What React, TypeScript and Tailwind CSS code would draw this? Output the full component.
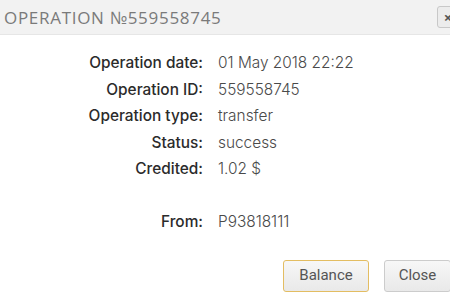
import React from 'react';

const rows: [string, string][] = [
    ['Operation date:', '01 May 2018 22:22'],
    ['Operation ID:', '559558745'],
    ['Operation type:', 'transfer'],
    ['Status:', 'success'],
    ['Credited:', '1.02 $'],
    ['', ''],
    ['From:', 'P93818111'],
];

export default function App() {
    return (
        <div className="w-[450px] h-[297px] overflow-hidden bg-white flex flex-col" style={{ fontFamily: '"Open Sans", sans-serif' }}>
            <div className="h-[35px] shrink-0 bg-[#f2f2f2] border-b border-[#e6e6e6] flex items-center justify-between pl-[4px]">
                <h1 className="text-[17px] tracking-[0.7px] text-[#7a7a7a] font-normal leading-none">OPERATION №559558745</h1>
                <button className="w-[22px] h-[22px] mr-[-9px] rounded-[3px] border border-[#c8c8c8] bg-[#ececec] text-[#555] text-[15px] font-bold leading-none flex items-center justify-center">
                    ×
                </button>
            </div>

            <div className="pt-[15px] grid grid-cols-[203px_1fr] text-[15.4px] leading-[26.5px]" style={{ fontFamily: 'Inter, sans-serif' }}>
                {rows.map(([label, value], i) => (
                    <React.Fragment key={i}>
                        <div className="text-right text-[#2b2b2b] font-medium h-[26.5px]">{label}</div>
                        <div className="pl-[15px] text-[#4a4a4a] font-light h-[26.5px]">{value}</div>
                    </React.Fragment>
                ))}
            </div>

            <div className="flex justify-end gap-[15px] mt-[24px] mr-[-1px]" style={{ fontFamily: 'Roboto, sans-serif' }}>
                <button className="w-[86px] h-[32px] rounded-[3px] border border-[#e3bd62] bg-gradient-to-b from-[#f7f7f7] to-[#e9e9e9] text-[#555] text-[15px]">
                    Balance
                </button>
                <button className="w-[67px] h-[32px] rounded-[3px] border border-[#cccccc] bg-gradient-to-b from-[#f7f7f7] to-[#e9e9e9] text-[#555] text-[15px]">
                    Close
                </button>
            </div>
        </div>
    );
}
